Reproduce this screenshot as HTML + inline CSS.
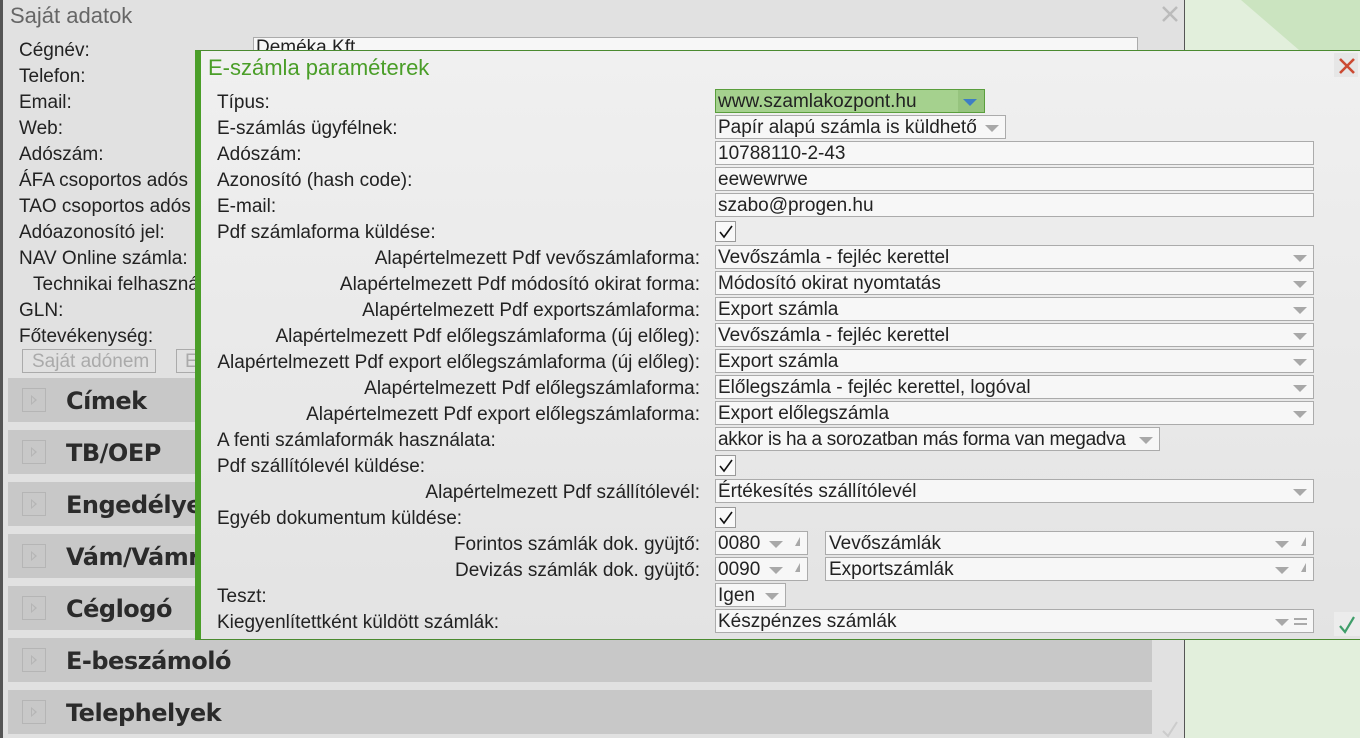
<!DOCTYPE html>
<html><head><meta charset="utf-8"><style>
*{box-sizing:border-box;margin:0;padding:0}
body{width:1360px;height:738px;overflow:hidden;position:relative;background:#e1e1e1;font-family:"Liberation Sans",Arial,sans-serif;color:#222;font-size:19px}
.a{position:absolute;white-space:nowrap}
.lbl{position:absolute;white-space:nowrap;line-height:28px;height:24px}
.in{position:absolute;height:24px;border:1px solid #ababab;background:#f7f7f7;line-height:24px;padding-left:2px;white-space:nowrap;overflow:hidden}
.dd::after{content:"";position:absolute;right:6px;top:9px;border-left:7px solid transparent;border-right:7px solid transparent;border-top:7px solid #a8a8a8}
.cb{position:absolute;width:21px;height:21px;border:1px solid #9a9a9a;background:#f9f9f9}
.cb svg{position:absolute;left:2px;top:2px}
.bar{position:absolute;left:8px;width:1144px;height:44px;background:#c8c8c8}
.bar .ic{position:absolute;left:14px;top:10px;width:24px;height:24px;border:1px solid #b5b5b5}
.bar .ic::after{content:"";position:absolute;left:8px;top:6px;border-top:5px solid transparent;border-bottom:5px solid transparent;border-left:6px solid #b5b5b5}
.bar .ic::before{content:"";position:absolute;left:9px;top:8px;border-top:3px solid transparent;border-bottom:3px solid transparent;border-left:3px solid #c8c8c8;z-index:1}
.bar span{position:absolute;left:58px;top:9px;font-weight:bold;font-size:24px;color:#2b2b2b;font-family:"DejaVu Sans","Liberation Sans",sans-serif;letter-spacing:-0.5px}
.corner{position:absolute;right:7px;top:5px;border-left:5px solid transparent;border-bottom:9px solid #a8a8a8;border-right:0}
</style></head><body>
<div class="a" style="left:0;top:0;width:3px;height:738px;background:#555"></div>
<div class="a" style="left:1184px;top:0;width:176px;height:738px;background:#e2efdc;border-left:1px solid #555"></div>
<svg class="a" style="left:1185px;top:0" width="175" height="50"><polygon points="56,0 175,0 175,50 114,50" fill="#cbe4c0"/></svg>
<div class="a" style="left:10px;top:3px;font-size:22px;color:#666">Saját adatok</div>
<svg class="a" style="left:1161px;top:5px" width="18" height="18"><path d="M2 2L16 16M16 2L2 16" stroke="#bbb" stroke-width="2.5"/></svg>
<div class="in" style="left:253px;top:37px;width:885px;height:14px;border-bottom:none;line-height:20px">Deméka Kft.</div>
<div class="lbl" style="left:19px;top:37px">Cégnév:</div>
<div class="lbl" style="left:19px;top:63px">Telefon:</div>
<div class="lbl" style="left:19px;top:89px">Email:</div>
<div class="lbl" style="left:19px;top:115px">Web:</div>
<div class="lbl" style="left:19px;top:141px">Adószám:</div>
<div class="lbl" style="left:19px;top:167px">ÁFA csoportos adós</div>
<div class="lbl" style="left:19px;top:193px">TAO csoportos adós</div>
<div class="lbl" style="left:19px;top:219px">Adóazonosító jel:</div>
<div class="lbl" style="left:19px;top:245px">NAV Online számla:</div>
<div class="lbl" style="left:33px;top:271px">Technikai felhaszná</div>
<div class="lbl" style="left:19px;top:297px">GLN:</div>
<div class="lbl" style="left:19px;top:323px">Főtevékenység:</div>
<div class="in" style="left:22px;top:349px;width:134px;background:#e1e1e1;color:#aaa;padding-left:9px">Saját adónem</div>
<div class="in" style="left:176px;top:349px;width:40px;background:#e1e1e1;color:#aaa;padding-left:8px">E</div>
<div class="bar" style="top:378px"><div class="ic"></div><span>Címek</span></div>
<div class="bar" style="top:430px"><div class="ic"></div><span>TB/OEP</span></div>
<div class="bar" style="top:482px"><div class="ic"></div><span>Engedélyek</span></div>
<div class="bar" style="top:534px"><div class="ic"></div><span>Vám/Vámr</span></div>
<div class="bar" style="top:586px"><div class="ic"></div><span>Céglogó</span></div>
<div class="bar" style="top:638px"><div class="ic"></div><span>E-beszámoló</span></div>
<div class="bar" style="top:690px"><div class="ic"></div><span>Telephelyek</span></div>
<svg class="a" style="left:1160px;top:718px" width="20" height="20"><path d="M3 13L8 18L17 4" stroke="#ccc" stroke-width="2" fill="none"/></svg>

<div class="a" style="left:195px;top:50px;width:1165px;height:590px;background:linear-gradient(#f0f0f0,#e3e3e3);border-left:6px solid #4a9e28;border-top:1px solid #4a8a30;border-bottom:1px solid #4a8a30"></div>
<div class="a" style="left:208px;top:55px;font-size:22px;color:#4a9e28">E-számla paraméterek</div>
<div class="a" style="left:1334px;top:53px;width:24px;height:24px;background:#e6e6e6"></div>
<svg class="a" style="left:1338px;top:57px" width="18" height="18"><path d="M2 2L16 16M16 2L2 16" stroke="#cc4a32" stroke-width="2.6"/></svg>

<div class="lbl" style="left:217px;top:89px">Típus:</div>
<div class="in" style="left:715px;top:89px;width:270px;background:#a5d18e;border-color:#5a9e3c">www.szamlakozpont.hu<div style="position:absolute;right:0;top:0;width:26px;height:22px;background:#96c47e"></div><div style="position:absolute;right:7px;top:9px;border-left:7px solid transparent;border-right:7px solid transparent;border-top:7px solid #3e7ec4"></div></div>
<div class="lbl" style="left:217px;top:115px">E-számlás ügyfélnek:</div>
<div class="in dd" style="left:715px;top:115px;width:291px">Papír alapú számla is küldhető</div>
<div class="lbl" style="left:217px;top:141px">Adószám:</div>
<div class="in" style="left:715px;top:141px;width:599px">10788110-2-43</div>
<div class="lbl" style="left:217px;top:167px">Azonosító (hash code):</div>
<div class="in" style="left:715px;top:167px;width:599px">eewewrwe</div>
<div class="lbl" style="left:217px;top:193px">E-mail:</div>
<div class="in" style="left:715px;top:193px;width:599px">szabo@progen.hu</div>
<div class="lbl" style="left:217px;top:219px">Pdf számlaforma küldése:</div>
<div class="cb" style="left:715px;top:221px"><svg width="16" height="16"><path d="M2 8L6 13L14 2" stroke="#111" stroke-width="1.6" fill="none"/></svg></div>

<div class="lbl" style="right:660px;top:245px">Alapértelmezett Pdf vevőszámlaforma:</div>
<div class="in dd" style="left:715px;top:245px;width:599px">Vevőszámla - fejléc kerettel</div>
<div class="lbl" style="right:660px;top:271px">Alapértelmezett Pdf módosító okirat forma:</div>
<div class="in dd" style="left:715px;top:271px;width:599px">Módosító okirat nyomtatás</div>
<div class="lbl" style="right:660px;top:297px">Alapértelmezett Pdf exportszámlaforma:</div>
<div class="in dd" style="left:715px;top:297px;width:599px">Export számla</div>
<div class="lbl" style="right:660px;top:323px">Alapértelmezett Pdf előlegszámlaforma (új előleg):</div>
<div class="in dd" style="left:715px;top:323px;width:599px">Vevőszámla - fejléc kerettel</div>
<div class="lbl" style="right:660px;top:349px">Alapértelmezett Pdf export előlegszámlaforma (új előleg):</div>
<div class="in dd" style="left:715px;top:349px;width:599px">Export számla</div>
<div class="lbl" style="right:660px;top:375px">Alapértelmezett Pdf előlegszámlaforma:</div>
<div class="in dd" style="left:715px;top:375px;width:599px">Előlegszámla - fejléc kerettel, logóval</div>
<div class="lbl" style="right:660px;top:401px">Alapértelmezett Pdf export előlegszámlaforma:</div>
<div class="in dd" style="left:715px;top:401px;width:599px">Export előlegszámla</div>
<div class="lbl" style="left:217px;top:427px">A fenti számlaformák használata:</div>
<div class="in dd" style="left:715px;top:427px;width:445px;letter-spacing:-0.3px">akkor is ha a sorozatban más forma van megadva</div>
<div class="lbl" style="left:217px;top:453px">Pdf szállítólevél küldése:</div>
<div class="cb" style="left:715px;top:455px"><svg width="16" height="16"><path d="M2 8L6 13L14 2" stroke="#111" stroke-width="1.6" fill="none"/></svg></div>
<div class="lbl" style="right:660px;top:479px">Alapértelmezett Pdf szállítólevél:</div>
<div class="in dd" style="left:715px;top:479px;width:599px">Értékesítés szállítólevél</div>
<div class="lbl" style="left:217px;top:505px">Egyéb dokumentum küldése:</div>
<div class="cb" style="left:715px;top:507px"><svg width="16" height="16"><path d="M2 8L6 13L14 2" stroke="#111" stroke-width="1.6" fill="none"/></svg></div>
<div class="lbl" style="right:660px;top:531px">Forintos számlák dok. gyüjtő:</div>
<div class="in" style="left:715px;top:531px;width:93px">0080<div class="dd" style="position:absolute;right:18px;top:0;width:20px;height:22px"></div><div class="corner"></div></div>
<div class="in" style="left:825px;top:531px;width:489px;padding-left:3px">Vevőszámlák<div class="dd" style="position:absolute;right:18px;top:0;width:20px;height:22px"></div><div class="corner"></div></div>
<div class="lbl" style="right:660px;top:557px">Devizás számlák dok. gyüjtő:</div>
<div class="in" style="left:715px;top:557px;width:93px">0090<div class="dd" style="position:absolute;right:18px;top:0;width:20px;height:22px"></div><div class="corner"></div></div>
<div class="in" style="left:825px;top:557px;width:489px;padding-left:3px">Exportszámlák<div class="dd" style="position:absolute;right:18px;top:0;width:20px;height:22px"></div><div class="corner"></div></div>
<div class="lbl" style="left:217px;top:583px">Teszt:</div>
<div class="in dd" style="left:715px;top:583px;width:71px">Igen</div>
<div class="lbl" style="left:217px;top:609px">Kiegyenlítettként küldött számlák:</div>
<div class="in" style="left:715px;top:609px;width:599px">Készpénzes számlák<div class="dd" style="position:absolute;right:18px;top:0;width:20px;height:22px"></div><div style="position:absolute;right:6px;top:8px;width:13px;height:7px;border-top:2px solid #aaa;border-bottom:2px solid #aaa"></div></div>
<div class="a" style="left:1334px;top:612px;width:26px;height:24px;background:#ececec"></div>
<svg class="a" style="left:1337px;top:614px" width="20" height="20"><path d="M3 12L8 18L17 3" stroke="#3f9e6a" stroke-width="2.2" fill="none"/></svg>
</body></html>
